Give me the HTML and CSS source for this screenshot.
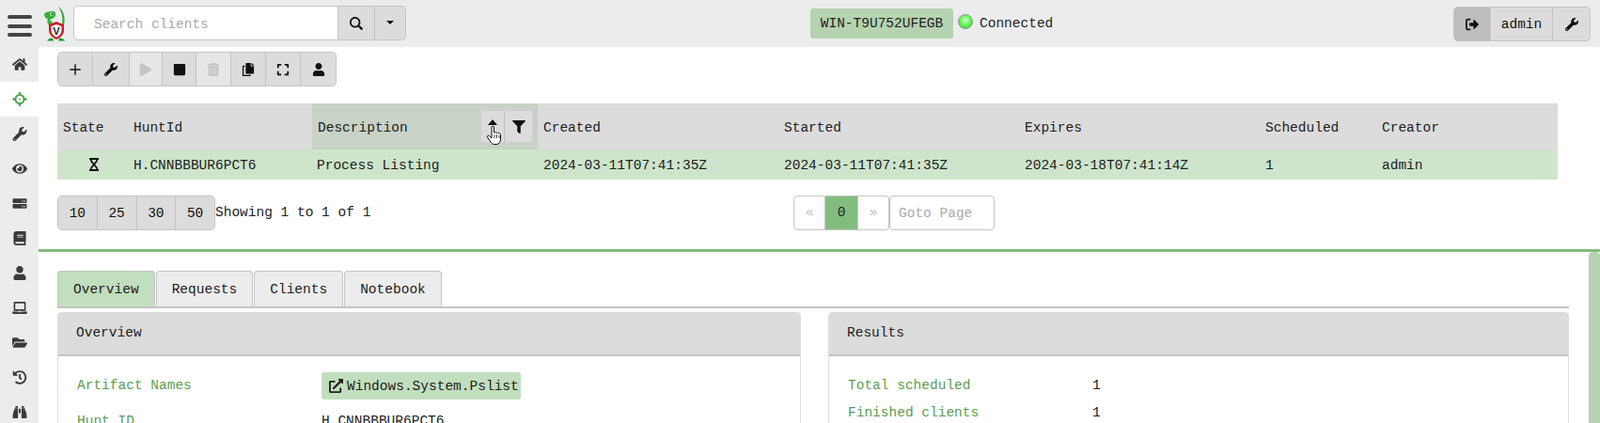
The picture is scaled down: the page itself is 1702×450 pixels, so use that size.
FILE: index.html

```html
<!DOCTYPE html>
<html lang="en">
<head>
  <meta charset="UTF-8" />
  <meta name="viewport" content="width=device-width, initial-scale=1.0" />
  <title>Hunts</title>
  <link rel="stylesheet" href="styles.css">
</head>
<body>
  <svg class="sprite" xmlns="http://www.w3.org/2000/svg">
    <symbol id="i-home" viewBox="0 0 576 512"><path d="M280.37 148.26L96 300.11V464a16 16 0 0 0 16 16l112.06-.29a16 16 0 0 0 15.92-16V368a16 16 0 0 1 16-16h64a16 16 0 0 1 16 16v95.64a16 16 0 0 0 16 16.05L464 480a16 16 0 0 0 16-16V300L295.67 148.26a12.19 12.19 0 0 0-15.3 0zM571.6 251.47L488 182.56V44.05a12 12 0 0 0-12-12h-56a12 12 0 0 0-12 12v72.61L318.47 43a48 48 0 0 0-61 0L4.34 251.47a12 12 0 0 0-1.6 16.9l25.5 31A12 12 0 0 0 45.15 301l235.22-193.74a12.19 12.19 0 0 1 15.3 0L530.9 301a12 12 0 0 0 16.9-1.6l25.5-31a12 12 0 0 0-1.7-16.93z"/></symbol>
    <symbol id="i-wrench" viewBox="0 0 512 512"><path d="M507.73 109.1c-2.24-9.03-13.54-12.09-20.12-5.51l-74.36 74.36-67.88-11.31-11.31-67.88 74.36-74.36c6.62-6.62 3.43-17.9-5.66-20.16-47.38-11.74-99.55.91-136.58 37.93-39.64 39.64-50.55 97.1-34.05 147.2L18.74 402.76c-24.99 24.99-24.99 65.51 0 90.5 24.99 24.99 65.51 24.99 90.5 0l213.21-213.21c50.12 16.71 107.47 5.68 147.37-34.22 37.07-37.07 49.7-89.32 37.91-136.73zM64 472c-13.25 0-24-10.75-24-24 0-13.26 10.75-24 24-24s24 10.74 24 24c0 13.25-10.75 24-24 24z"/></symbol>
    <symbol id="i-play" viewBox="0 0 448 512"><path d="M424.4 214.7L72.4 6.6C43.8-10.3 0 6.1 0 47.9V464c0 37.5 40.7 60.1 72.4 41.3l352-208c31.4-18.5 31.5-64.1 0-82.6z"/></symbol>
    <symbol id="i-stop" viewBox="0 0 448 512"><path d="M400 32H48C21.5 32 0 53.5 0 80v352c0 26.5 21.5 48 48 48h352c26.5 0 48-21.5 48-48V80c0-26.5-21.5-48-48-48z"/></symbol>
    <symbol id="i-plus" viewBox="0 0 448 512"><path d="M198 48h52v182h182v52H250v182h-52V282H16v-52h182z"/></symbol>
    <symbol id="i-trash" viewBox="0 0 448 512"><path d="M32 464a48 48 0 0 0 48 48h288a48 48 0 0 0 48-48V128H32zm272-256a16 16 0 0 1 32 0v224a16 16 0 0 1-32 0zm-96 0a16 16 0 0 1 32 0v224a16 16 0 0 1-32 0zm-96 0a16 16 0 0 1 32 0v224a16 16 0 0 1-32 0zM432 32H312l-9-19A24 24 0 0 0 281 0H167a24 24 0 0 0-21 13l-9 19H16A16 16 0 0 0 0 48v32a16 16 0 0 0 16 16h416a16 16 0 0 0 16-16V48a16 16 0 0 0-16-16z"/></symbol>
    <symbol id="i-copy" viewBox="0 0 448 512"><path d="M320 448v40c0 13.255-10.745 24-24 24H24c-13.255 0-24-10.745-24-24V120c0-13.255 10.745-24 24-24h72v52H50v314h220v-14zm0-344V0H152c-13.255 0-24 10.745-24 24v368c0 13.255 10.745 24 24 24h272c13.255 0 24-10.745 24-24V128H344c-13.2 0-24-10.8-24-24zm120.971-31.029L375.029 7.029A24 24 0 0 0 358.059 0H352v96h96v-6.059a24 24 0 0 0-7.029-16.97z"/></symbol>
    <symbol id="i-expand" viewBox="0 0 448 512"><path d="M0 180V56c0-13.3 10.7-24 24-24h124c6.6 0 12 5.4 12 12v40c0 6.6-5.4 12-12 12H64v84c0 6.6-5.4 12-12 12H12c-6.6 0-12-5.4-12-12zM288 44v40c0 6.6 5.4 12 12 12h84v84c0 6.6 5.4 12 12 12h40c6.6 0 12-5.4 12-12V56c0-13.3-10.7-24-24-24H300c-6.6 0-12 5.4-12 12zm148 276h-40c-6.6 0-12 5.4-12 12v84h-84c-6.6 0-12 5.4-12 12v40c0 6.6 5.4 12 12 12h124c13.3 0 24-10.7 24-24V332c0-6.6-5.4-12-12-12zM160 468v-40c0-6.6-5.4-12-12-12H64v-84c0-6.6-5.4-12-12-12H12c-6.6 0-12 5.4-12 12v124c0 13.3 10.7 24 24 24h124c6.6 0 12-5.4 12-12z"/></symbol>
    <symbol id="i-user" viewBox="0 0 448 512"><path d="M224 256c70.7 0 128-57.3 128-128S294.7 0 224 0 96 57.3 96 128s57.3 128 128 128zm89.6 32h-16.7c-22.2 10.2-46.9 16-72.9 16s-50.6-5.8-72.9-16h-16.7C60.2 288 0 348.2 0 422.4V464c0 26.5 21.5 48 48 48h352c26.5 0 48-21.5 48-48v-41.6c0-74.2-60.2-134.4-134.4-134.4z"/></symbol>
    <symbol id="i-search" viewBox="0 0 512 512"><path d="M505 442.7L405.3 343c-4.5-4.5-10.6-7-17-7H372c27.6-35.3 44-79.7 44-128C416 93.1 322.9 0 208 0S0 93.1 0 208s93.1 208 208 208c48.3 0 92.7-16.4 128-44v16.3c0 6.4 2.5 12.5 7 17l99.7 99.7c9.4 9.4 24.6 9.4 33.9 0l28.3-28.3c9.4-9.4 9.4-24.6.1-34zM208 352c-79.5 0-144-64.4-144-144 0-79.5 64.4-144 144-144 79.5 0 144 64.4 144 144 0 79.5-64.4 144-144 144z"/></symbol>
    <symbol id="i-filter" viewBox="0 0 512 512"><path d="M487.976 0H24.028C2.71 0-8.047 25.866 7.058 40.971L192 225.941V432c0 7.831 3.821 15.17 10.237 19.662l80 55.98C298.02 518.69 320 507.493 320 487.98V225.941l184.947-184.97C520.021 25.896 509.338 0 487.976 0z"/></symbol>
    <symbol id="i-signout" viewBox="0 0 512 512"><path d="M502 273L345 430c-15 15-41 4-41-17v-89H177c-13 0-24-11-24-24v-88c0-13 11-24 24-24h127V99c0-21 26-32 41-17l157 157c9 9 9 25 0 34zM192 436v40c0 7-5 12-12 12H96c-53 0-96-43-96-96V120c0-53 43-96 96-96h84c7 0 12 5 12 12v40c0 7-5 12-12 12H96c-18 0-32 14-32 32v272c0 18 14 32 32 32h84c7 0 12 5 12 12z"/></symbol>
    <symbol id="i-target" viewBox="0 0 512 512"><path d="M256 66a190 190 0 1 0 0 380 190 190 0 0 0 0-380zm0 70a120 120 0 1 1 0 240 120 120 0 0 1 0-240z"/><path d="M216 0h80v110h-80zM216 402h80v110h-80zM0 216h110v80H0zM402 216h110v80H402z"/><circle cx="256" cy="256" r="30"/></symbol>
    <symbol id="i-eye" viewBox="0 0 576 512"><path d="M572.52 241.4C518.29 135.59 410.93 64 288 64S57.68 135.64 3.48 241.41a32.35 32.35 0 0 0 0 29.19C57.71 376.41 165.07 448 288 448s230.32-71.64 284.52-177.41a32.35 32.35 0 0 0 0-29.19zM288 400a144 144 0 1 1 144-144 143.93 143.93 0 0 1-144 144zm0-240a95.31 95.31 0 0 0-25.31 3.79 47.85 47.85 0 0 1-66.9 66.9A95.78 95.78 0 1 0 288 160z"/></symbol>
    <symbol id="i-server" viewBox="0 0 512 512"><path d="M480 240H32c-18 0-32-14-32-32v-96c0-18 14-32 32-32h448c18 0 32 14 32 32v96c0 18-14 32-32 32zm-48-92a24 24 0 1 0 0 48 24 24 0 0 0 0-48zm-72 0a24 24 0 1 0 0 48 24 24 0 0 0 0-48zM480 432H32c-18 0-32-14-32-32v-96c0-18 14-32 32-32h448c18 0 32 14 32 32v96c0 18-14 32-32 32zm-48-92a24 24 0 1 0 0 48 24 24 0 0 0 0-48zm-72 0a24 24 0 1 0 0 48 24 24 0 0 0 0-48z"/></symbol>
    <symbol id="i-book" viewBox="0 0 448 512"><path d="M448 360V24c0-13.3-10.7-24-24-24H96C43 0 0 43 0 96v320c0 53 43 96 96 96h328c13 0 24-11 24-24v-16c0-8-4-15-9-19-4-15-4-59 0-73 6-5 9-12 9-20zM128 134c0-3 3-6 6-6h212c3 0 6 3 6 6v20c0 3-3 6-6 6H134c-3 0-6-3-6-6zm0 64c0-3 3-6 6-6h212c3 0 6 3 6 6v20c0 3-3 6-6 6H134c-3 0-6-3-6-6zm253 250H96c-18 0-32-14-32-32s14-32 32-32h285c-2 17-2 47 0 64z"/></symbol>
    <symbol id="i-laptop" viewBox="0 0 640 512"><path d="M624 416H381.54c-.74 19.81-14.71 32-32.74 32H288c-18.69 0-33.02-17.47-32.77-32H16c-8.8 0-16 7.2-16 16v16c0 35.2 28.8 64 64 64h512c35.2 0 64-28.8 64-64v-16c0-8.8-7.2-16-16-16zM576 48c0-26.4-21.6-48-48-48H112C85.6 0 64 21.6 64 48v336h512V48zm-64 272H128V64h384v256z"/></symbol>
    <symbol id="i-folder" viewBox="0 0 576 512"><path d="M572.694 292.093L500.27 416.248A63.997 63.997 0 0 1 444.989 448H45.025c-18.523 0-30.064-20.093-20.731-36.093l72.424-124.155A64 64 0 0 1 152 256h399.964c18.523 0 30.064 20.093 20.73 36.093zM152 224h328v-48c0-26.51-21.49-48-48-48H272l-64-64H48C21.49 64 0 85.49 0 112v278.046l69.077-118.418C86.214 242.25 117.989 224 152 224z"/></symbol>
    <symbol id="i-history" viewBox="0 0 512 512"><path d="M504 255.531c.253 136.64-111.18 248.372-247.82 248.468-59.015.042-113.223-20.53-155.822-54.911-11.077-8.94-11.905-25.541-1.839-35.607l11.267-11.267c8.609-8.609 22.353-9.551 31.891-1.984C173.062 425.135 212.781 440 256 440c101.705 0 184-82.311 184-184 0-101.705-82.311-184-184-184-48.814 0-93.149 18.969-126.068 49.932l50.754 50.754c10.08 10.08 2.941 27.314-11.313 27.314H24c-8.837 0-16-7.163-16-16V38.627c0-14.254 17.234-21.393 27.314-11.314l49.372 49.372C129.209 34.136 189.552 8 256 8c136.81 0 247.747 110.78 248 247.531zm-180.912 78.784l9.823-12.63c8.138-10.463 6.253-25.542-4.21-33.679L288 256.349V152c0-13.255-10.745-24-24-24h-16c-13.255 0-24 10.745-24 24v135.651l65.409 50.874c10.463 8.137 25.541 6.253 33.679-4.21z"/></symbol>
    <symbol id="i-binoculars" viewBox="0 0 512 512"><path d="M416 48c0-9-7-16-16-16h-64c-9 0-16 7-16 16v48h96zM63 160c-1 28-49 62-63 240v48c0 18 14 32 32 32h128c18 0 32-14 32-32V128c0-9-7-16-16-16H96c-18 0-32 14-33 48zm386 0c-1-34-15-48-33-48h-80c-9 0-16 7-16 16v320c0 18 14 32 32 32h128c18 0 32-14 32-32v-48c-14-178-62-212-63-240zM288 128h-64v160h64zM192 48c0-9-7-16-16-16h-64c-9 0-16 7-16 16v48h96z"/></symbol>
    <symbol id="i-link" viewBox="0 0 512 512"><path d="M432 320h-32a16 16 0 0 0-16 16v112H64V128h144a16 16 0 0 0 16-16V80a16 16 0 0 0-16-16H48a48 48 0 0 0-48 48v352a48 48 0 0 0 48 48h352a48 48 0 0 0 48-48V336a16 16 0 0 0-16-16zM488 0H360c-21.4 0-32 25.9-17 41l35.7 35.7L135 320.4a24 24 0 0 0 0 34l22.7 22.6a24 24 0 0 0 34 0L435.3 133.3 471 169c15 15 41 4.5 41-17V24a24 24 0 0 0-24-24z"/></symbol>
  </svg>

  <header class="topbar">
    <div class="burger"><span></span><span></span><span></span></div>
    <svg class="logo" viewBox="0 0 24 37">
      <path d="M15 0c5 3 8 11 6 20h-2c1-8 0-14-4-20z" fill="#2fa83a"/>
      <path d="M0 8c1-2 5-3 8-3 3-1 5 2 4 5-1 2-4 3-6 4l3 3-4 3c-2-2-2-5-1-7-2 0-4-2-4-5z" fill="#35b03a"/>
      <circle cx="8" cy="8" r="1.8" fill="#e8f4d8"/><circle cx="8.500" cy="8" r=".9" fill="#123"/>
      <path d="M3 36.500c1-2 3-3 6-3l1 3zM22 36.500c-1-2-3-3-6-3l-1 3z" fill="#1fa02c"/>
      <path d="M13 16l8 3v6c0 5-4 8-8 10-4-2-8-5-8-10v-6z" fill="#c81e28"/>
      <path d="M13 19l5.500 2v4.500c0 3.500-2.500 5.500-5.500 7-3-1.500-5.500-3.500-5.500-7V21z" fill="#fff"/>
      <text x="13" y="30" text-anchor="middle" class="logo-v">V</text>
    </svg>
    <div class="search">
      <input class="search-input" type="text" placeholder="Search clients" />
      <button class="btn search-btn"><svg class="ico ico-md"><use href="#i-search"/></svg></button>
      <button class="btn caret-btn"><span class="caret"></span></button>
    </div>
    <div class="status">
      <span class="host">WIN-T9U752UFEGB</span>
      <span class="dot"></span>
      <span class="conn">Connected</span>
    </div>
    <div class="btn-group user-group">
      <button class="btn btn-on logout"><svg class="ico ico-md"><use href="#i-signout"/></svg></button>
      <button class="btn admin">admin</button>
      <button class="btn settings"><svg class="ico ico-md"><use href="#i-wrench"/></svg></button>
    </div>
  </header>

  <div class="shell">
    <nav class="sidebar">
      <a class="nav-item"><svg class="ico ico-nav"><use href="#i-home"/></svg></a>
      <a class="nav-item active"><svg class="ico ico-nav"><use href="#i-target"/></svg></a>
      <a class="nav-item"><svg class="ico ico-nav"><use href="#i-wrench"/></svg></a>
      <a class="nav-item"><svg class="ico ico-nav"><use href="#i-eye"/></svg></a>
      <a class="nav-item"><svg class="ico ico-nav"><use href="#i-server"/></svg></a>
      <a class="nav-item"><svg class="ico ico-nav"><use href="#i-book"/></svg></a>
      <a class="nav-item"><svg class="ico ico-nav"><use href="#i-user"/></svg></a>
      <a class="nav-item"><svg class="ico ico-nav"><use href="#i-laptop"/></svg></a>
      <a class="nav-item"><svg class="ico ico-nav"><use href="#i-folder"/></svg></a>
      <a class="nav-item"><svg class="ico ico-nav"><use href="#i-history"/></svg></a>
      <a class="nav-item"><svg class="ico ico-nav"><use href="#i-binoculars"/></svg></a>
    </nav>

    <main class="main">
      <section class="upper">
        <div class="btn-group toolbar">
          <button class="btn t1"><svg class="ico ico-md"><use href="#i-plus"/></svg></button>
          <button class="btn t2"><svg class="ico ico-md"><use href="#i-wrench"/></svg></button>
          <button class="btn t3 off"><svg class="ico ico-md"><use href="#i-play"/></svg></button>
          <button class="btn t4"><svg class="ico ico-md"><use href="#i-stop"/></svg></button>
          <button class="btn t5 off"><svg class="ico ico-md"><use href="#i-trash"/></svg></button>
          <button class="btn t6"><svg class="ico ico-md"><use href="#i-copy"/></svg></button>
          <button class="btn t7"><svg class="ico ico-md"><use href="#i-expand"/></svg></button>
          <button class="btn t8"><svg class="ico ico-md"><use href="#i-user"/></svg></button>
        </div>

        <table class="hunts">
          <colgroup>
            <col class="c-state"><col class="c-id"><col class="c-desc"><col class="c-date"><col class="c-date"><col class="c-date"><col class="c-sched"><col>
          </colgroup>
          <thead>
            <tr>
              <th>State</th>
              <th>HuntId</th>
              <th class="sorted">
                <div class="th-inner">
                  <span class="th-label">Description</span>
                  <div class="sort-btns">
                    <button class="sort-btn sort-up">
                      <span class="arrow"></span>
                      <svg class="hand" viewBox="0 0 18 22"><path d="M6 2c0-1 2.500-1 2.500 0v6l1-.2c1-.2 1.500 0 2 .5 1-.3 1.700 0 2 .6 1-.2 2 .4 2 1.600v4.500c0 3-1.500 5.500-4.500 5.500H9c-2 0-3-1-4-2.500L1.500 13c-.8-1.200.8-2.500 2-1.500L6 14z" fill="#fff" stroke="#111" stroke-width="1"/><path d="M9 10v4M11.500 10v4M14 11v3" stroke="#111" stroke-width=".8"/></svg>
                    </button>
                    <button class="sort-btn"><svg class="ico ico-sm"><use href="#i-filter"/></svg></button>
                  </div>
                </div>
              </th>
              <th>Created</th>
              <th>Started</th>
              <th>Expires</th>
              <th>Scheduled</th>
              <th>Creator</th>
            </tr>
          </thead>
          <tbody>
            <tr>
              <td class="state-cell">
                <svg class="hourglass" viewBox="0 0 12 14"><path d="M1 1h10M1 13h10M2.500 1c0 3 2 4.500 3.500 6 1.500 1.500 3.500 3 3.500 6M9.500 1c0 3-2 4.500-3.500 6-1.500 1.500-3.500 3-3.500 6" fill="none" stroke="#111" stroke-width="1.8"/></svg>
              </td>
              <td>H.CNNBBBUR6PCT6</td>
              <td class="td-desc">Process Listing</td>
              <td>2024-03-11T07:41:35Z</td>
              <td>2024-03-11T07:41:35Z</td>
              <td>2024-03-18T07:41:14Z</td>
              <td>1</td>
              <td>admin</td>
            </tr>
          </tbody>
        </table>

        <div class="paging">
          <div class="page-left">
            <div class="btn-group sizes">
              <button class="btn">10</button>
              <button class="btn">25</button>
              <button class="btn">30</button>
              <button class="btn">50</button>
            </div>
            <span class="showing">Showing 1 to 1 of 1</span>
          </div>
          <div class="pager">
            <span class="pg pg-first">«</span>
            <span class="pg pg-cur">0</span>
            <span class="pg pg-last">»</span>
            <input class="goto" type="text" placeholder="Goto Page" />
          </div>
        </div>
      </section>

      <div class="splitter"></div>

      <section class="lower">
        <div class="lower-body">
          <div class="tabs">
            <a class="tab active">Overview</a>
            <a class="tab">Requests</a>
            <a class="tab">Clients</a>
            <a class="tab">Notebook</a>
          </div>
          <div class="cards">
            <div class="card card-overview">
              <div class="card-head">Overview</div>
              <div class="card-body">
                <dl class="rows">
                  <dt>Artifact Names</dt>
                  <dd><span class="artifact"><svg class="ico ico-link"><use href="#i-link"/></svg>Windows.System.Pslist</span></dd>
                  <dt>Hunt ID</dt>
                  <dd>H.CNNBBBUR6PCT6</dd>
                </dl>
              </div>
            </div>
            <div class="card card-results">
              <div class="card-head">Results</div>
              <div class="card-body">
                <dl class="rows rows-tight">
                  <dt>Total scheduled</dt>
                  <dd>1</dd>
                  <dt>Finished clients</dt>
                  <dd>1</dd>
                </dl>
              </div>
            </div>
          </div>
        </div>
        <div class="scrollbar"></div>
      </section>
    </main>
  </div>
</body>
</html>
```

FILE: styles.css

```css
* {
  box-sizing: border-box;
}
html, body {
  height: 450px;
  margin: 0;
  overflow: hidden;
}
body {
  font-family: "Liberation Mono", monospace;
  font-size: 14.5px;
  color: #212121;
  background-color: #fff;
}
.sprite {
  display: none;
}
.ico {
  display: block;
  fill: currentColor;
}
.ico-md {
  width: 14px;
  height: 14px;
  margin: 0 auto;
}
.ico-sm {
  width: 14px;
  height: 14px;
  margin: 0 auto;
}
.ico-nav {
  width: 16px;
  height: 15px;
}
.ico-link {
  flex: none;
  width: 15px;
  height: 15px;
  margin-right: 4px;
}

/* top bar */
.topbar {
  height: 50px;
  background-color: #ececec;
  display: flex;
  align-items: flex-start;
  position: relative;
}
.burger {
  width: 47px;
  padding: 16px 0 0 8px;
}
.burger span {
  display: block;
  width: 26px;
  height: 4px;
  margin-bottom: 5.5px;
  border-radius: 2px;
  background-color: #444;
}
.logo {
  width: 24px;
  height: 37px;
  margin-top: 7px;
}
.logo-v {
  font-family: "Liberation Sans", sans-serif;
  font-size: 11px;
  font-weight: bold;
  fill: #222;
}
.search {
  display: flex;
  margin: 6px 0 0 7px;
  height: 37px;
}
.search-input {
  width: 282px;
  height: 37px;
  padding: 2px 21px 0;
  border: 1px solid #c4c4c4;
  border-radius: 5px 0 0 5px;
  font-family: inherit;
  font-size: 14.5px;
  outline: none;
}
.search-input::placeholder, .goto::placeholder {
  color: #aaa;
  opacity: 1;
}
.btn {
  display: block;
  height: 100%;
  padding: 0;
  border: 1px solid #c4c4c4;
  border-left-width: 0;
  background-color: #dcdcdc;
  color: #111;
  font-family: inherit;
  font-size: 14.5px;
}
.search-btn {
  width: 39px;
}
.caret-btn {
  width: 33px;
  border-radius: 0 5px 5px 0;
}
.caret {
  display: block;
  width: 0;
  height: 0;
  margin: -2px auto 0;
  border-top: 4px solid #111;
  border-left: 4px solid transparent;
  border-right: 4px solid transparent;
}
.status {
  display: flex;
  align-items: center;
  height: 32px;
  margin: 9px 0 0 430px;
}
.host {
  display: block;
  width: 152px;
  height: 32px;
  line-height: 33px;
  text-align: center;
  border-radius: 3px;
  background-color: #b5d3b0;
}
.dot {
  width: 16px;
  height: 16px;
  margin: -4px 7px 0 5px;
  border-radius: 50%;
  border: 1px solid #8a9a8a;
  background: radial-gradient(circle at 50% 40%, #c8ffc0 0, #5df04e 55%, #3cc832 100%);
}
.conn {
  color: #222;
}
.btn-group {
  display: flex;
  height: 37px;
}
.btn-group .btn:first-child {
  border-left-width: 1px;
  border-radius: 5px 0 0 5px;
}
.btn-group .btn:last-child {
  border-radius: 0 5px 5px 0;
}
.user-group {
  margin: 7px 0 0 auto;
  margin-right: 10px;
}
.logout {
  width: 40px;
}
.btn-on {
  background-color: #bdbdbd;
}
.admin {
  width: 66px;
}
.settings {
  width: 40px;
}

.shell {
  display: flex;
  height: 400px;
}

/* sidebar */
.sidebar {
  width: 41px;
  flex: none;
  background-color: #ececec;
}
.nav-item {
  display: flex;
  align-items: center;
  justify-content: center;
  height: 37px;
  color: #3a3a3a;
}
.nav-item.active {
  background-color: #fff;
  color: #4ca54c;
}

.main {
  flex: 1;
  min-width: 0;
}
.upper {
  padding: 5px 45px 0 20px;
}

/* toolbar */
.toolbar .t1 { width: 38px; }
.toolbar .t2 { width: 39px; }
.toolbar .t3 { width: 35px; }
.toolbar .t4 { width: 36px; }
.toolbar .t5 { width: 37px; }
.toolbar .t6 { width: 37px; }
.toolbar .t7 { width: 37px; }
.toolbar .t8 { width: 38px; }
.btn.off {
  background-color: #e6e6e6;
  color: #c4c4c4;
}

/* hunts table */
.hunts {
  width: 100%;
  margin-top: 18px;
  border-collapse: collapse;
  table-layout: fixed;
}
.c-state { width: 75px; }
.c-id { width: 196px; }
.c-desc { width: 240px; }
.c-date { width: 256px; }
.c-sched { width: 124px; }
.hunts th {
  height: 49px;
  padding: 2px 6px 0;
  text-align: left;
  font-weight: normal;
  background-color: #dcdcdc;
}
.hunts th.sorted {
  padding: 0 5px 0 6px;
  background-color: #c8d2c6;
}
.th-label {
  padding-top: 2px;
}
.hunts td {
  height: 32px;
  padding: 1px 6px 0;
  background-color: #cee5cc;
  white-space: nowrap;
}
.hunts td.td-desc {
  padding-left: 5px;
}
.hunts td.state-cell {
  padding: 0;
}
.hourglass {
  display: block;
  width: 12px;
  height: 14px;
  margin-left: 33px;
}
.th-inner {
  display: flex;
  align-items: center;
  justify-content: space-between;
}
.sort-btns {
  display: flex;
  width: 56px;
  height: 35px;
}
.sort-btn {
  flex: 1;
  position: relative;
  padding: 0;
  border: 1px solid #d0d0d0;
  background-color: #dcdcdc;
  color: #111;
}
.sort-up {
  flex: none;
  width: 26px;
  border-radius: 3px 0 0 3px;
  border-right: 1px solid #bdbdbd;
}
.sort-btn:last-child {
  border-left: 0;
  border-radius: 0 3px 3px 0;
}
.arrow {
  display: block;
  width: 0;
  height: 0;
  margin: -8px auto 0;
  border-bottom: 6px solid #111;
  border-left: 5px solid transparent;
  border-right: 5px solid transparent;
}
.hand {
  position: absolute;
  left: 5px;
  top: 15px;
  width: 18px;
  height: 22px;
}

/* paging */
.paging {
  display: flex;
  margin-top: 17px;
  height: 37px;
}
.page-left {
  display: flex;
  width: 783px;
}
.sizes {
  width: 168px;
}
.sizes .btn {
  flex: 1;
}
.showing {
  margin-top: 10px;
  line-height: 17px;
}
.pager {
  display: flex;
}
.pg {
  width: 35px;
  height: 37px;
  line-height: 35px;
  text-align: center;
  border: 1px solid #c4c4c4;
  border-left-width: 0;
  color: #bbb;
}
.pg-first {
  width: 34px;
  border-left-width: 1px;
  border-radius: 4px 0 0 4px;
}
.pg-cur {
  color: #222;
  background-color: #83bd7e;
}
.pg-last {
  width: 33px;
  border-radius: 0 4px 4px 0;
}
.goto {
  width: 112px;
  height: 37px;
  padding: 0 9px;
  border: 1px solid #c4c4c4;
  border-radius: 4px;
  font-family: inherit;
  font-size: 14.5px;
}

.splitter {
  height: 3px;
  margin-top: 20px;
  background-color: #83bd7e;
}

/* lower pane */
.lower {
  display: flex;
  justify-content: space-between;
}
.lower-body {
  width: 1628px;
  padding: 20px 0 0 20px;
}
.scrollbar {
  width: 12px;
  height: 200px;
  border-radius: 4px 4px 0 0;
  background-color: #b5d3b0;
}
.tabs {
  display: flex;
  height: 40px;
  border-bottom: 2px solid #c4c4c4;
}
.tab {
  display: block;
  height: 38px;
  margin-right: 1px;
  padding: 0 16px;
  line-height: 38px;
  background-color: #ececec;
  border: 1px solid #c4c4c4;
  border-bottom: 0;
  border-radius: 4px 4px 0 0;
}
.tab.active {
  background-color: #c1dfbe;
}
.cards {
  display: flex;
  justify-content: space-between;
  margin-top: 4px;
}
.card {
  border: 1px solid #dcdcdc;
  border-radius: 4px 4px 0 0;
}
.card-overview {
  width: 791px;
}
.card-results {
  width: 788px;
}
.card-head {
  height: 46px;
  padding: 0 19px;
  line-height: 42px;
  background-color: #dcdcdc;
  border-bottom: 2px solid #c4c4c4;
}
.card-body {
  padding: 17px 20px 0;
}
.rows {
  display: grid;
  grid-template-columns: 260px 1fr;
  grid-auto-rows: 38px;
  align-items: start;
  margin: 0;
}
.rows-tight {
  grid-auto-rows: 29px;
}
.rows dt {
  padding-top: 6px;
  color: #5a9e52;
}
.rows dd {
  margin: 0;
  padding-top: 6px;
}
.artifact {
  display: inline-flex;
  align-items: center;
  width: 212px;
  height: 29px;
  margin-top: -6px;
  padding-left: 8px;
  border-radius: 3px;
  background-color: #c1dfbe;
}
```
